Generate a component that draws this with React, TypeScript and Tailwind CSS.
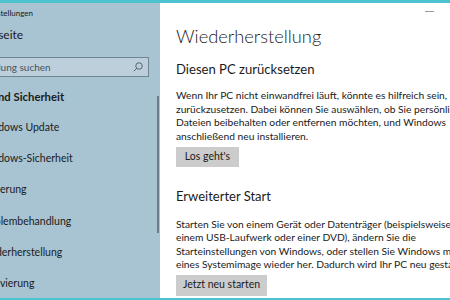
import React from "react"

const font = { fontFamily: 'Lato, "Noto Sans", sans-serif' }

const navItems = [
  { label: "Windows Update", shift: "ml-[-21px]" },
  { label: "Windows-Sicherheit", shift: "ml-[-21px]" },
  { label: "Sicherung", shift: "ml-[-19px]" },
  { label: "Problembehandlung", shift: "ml-[-21px]" },
  { label: "Wiederherstellung", shift: "ml-[-23px]" },
  { label: "Aktivierung", shift: "ml-[-19px]" },
]

function SearchIcon() {
  return (
    <svg width="12" height="12" viewBox="0 0 24 24" fill="none" stroke="#3b4a55" strokeWidth="1.6">
      <circle cx="14" cy="10" r="6.5" />
      <path d="M9.3 14.7 3.5 20.5" />
    </svg>
  )
}

export default function App() {
  return (
    <div
      className="w-[450px] h-[300px] flex flex-col overflow-hidden bg-white border-t-[3px] border-b-2 border-[#4ec3d0] text-[#1b1b1b]"
      style={font}
    >
      <div className="flex flex-1 min-h-0">
        {/* Sidebar */}
        <div className="relative w-[160px] shrink-0 bg-[#a8c3d2] overflow-hidden whitespace-nowrap">
          <div className="h-[19px] flex items-center ml-[-14px] text-[8px]">Einstellungen</div>
          <div className="h-[26px] flex items-center ml-[-27px] text-[12px]">Startseite</div>
          <div className="mt-[9px] h-[20px] ml-[-50px] w-[199px] flex items-center justify-between border border-[#6d8694] bg-[#bccfdb] pl-[18px] pr-[4px]">
            <span className="text-[10px] text-[#44545e]">Einstellung suchen</span>
            <SearchIcon />
          </div>
          <div className="mt-[5px] h-[30px] flex items-center ml-[-48px] text-[11.3px] font-bold">
            Update und Sicherheit
          </div>
          {navItems.map((item) => (
            <div key={item.label} className={`h-[31.3px] flex items-center text-[10.5px] ${item.shift}`}>
              {item.label}
            </div>
          ))}
          <div className="absolute left-[157px] top-[93px] w-[1.5px] h-[137px] bg-[#6b7d89]" />
        </div>

        {/* Content */}
        <div className="flex-1 min-w-0 pl-[16px] overflow-hidden whitespace-nowrap">
          <div className="h-[16px] flex justify-end pr-[16px] items-center">
            <div className="w-[9px] h-[1px] bg-[#9a9a9a]" />
          </div>
          <div className="mt-[5px] text-[18.3px] leading-[24px] font-light">Wiederherstellung</div>
          <div className="mt-[12px] text-[13.1px] leading-[18px]">Diesen PC zurücksetzen</div>
          <div className="mt-[11px] text-[10.25px] leading-[13.5px]">
            Wenn Ihr PC nicht einwandfrei läuft, könnte es hilfreich sein, ihn
            <br />
            zurückzusetzen. Dabei können Sie auswählen, ob Sie persönliche
            <br />
            Dateien beibehalten oder entfernen möchten, und Windows
            <br />
            anschließend neu installieren.
          </div>
          <button className="mt-[4px] h-[20px] w-[63px] bg-[#cccccc] text-[10.5px] flex items-center justify-center">
            Los geht's
          </button>
          <div className="mt-[20px] text-[13px] leading-[18px]">Erweiterter Start</div>
          <div className="mt-[13px] text-[10.25px] leading-[13.4px]">
            Starten Sie von einem Gerät oder Datenträger (beispielsweise von
            <br />
            einem USB-Laufwerk oder einer DVD), ändern Sie die
            <br />
            Starteinstellungen von Windows, oder stellen Sie Windows mithilfe
            <br />
            eines Systemimage wieder her. Dadurch wird Ihr PC neu gestartet.
          </div>
          <button className="mt-[3px] h-[21px] w-[91px] bg-[#cccccc] text-[10.5px] flex items-center justify-center">
            Jetzt neu starten
          </button>
        </div>
      </div>
    </div>
  )
}
